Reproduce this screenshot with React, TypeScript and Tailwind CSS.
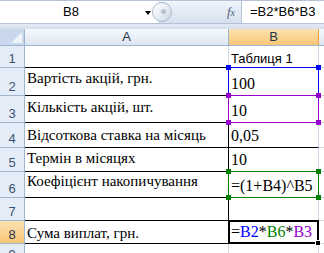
import React from "react";

type Row = {
  n: string;
  h: string;
  a?: string;
  aPad?: string;
  b?: React.ReactNode;
  bSans?: boolean;
  aLine?: boolean;
  bLine?: boolean;
  sel?: "blue" | "purple" | "green" | "active";
};

const rows: Row[] = [
  { n: "1", h: "h-[22px]", b: "Таблиця 1", bSans: true, aLine: true },
  { n: "2", h: "h-[28px]", a: "Вартість акцій, грн.", aPad: "pt-[2px]", b: "100", aLine: true, sel: "blue" },
  { n: "3", h: "h-[27px]", a: "Кількість акцій, шт.", aPad: "pt-[3px]", b: "10", aLine: true, sel: "purple" },
  { n: "4", h: "h-[25px]", a: "Відсоткова ставка на місяць", aPad: "pt-[4px]", b: "0,05", aLine: true, bLine: true },
  { n: "5", h: "h-[24px]", a: "Термін в місяцях", aPad: "pt-[2px]", b: "10", aLine: true },
  { n: "6", h: "h-[26px]", a: "Коефіцієнт накопичування", aPad: "pt-[1px]", b: "=(1+B4)^B5", aLine: true, sel: "green" },
  { n: "7", h: "h-[23px]", aLine: true, bLine: true },
  {
    n: "8",
    h: "h-[23px]",
    a: "Сума виплат, грн.",
    aPad: "pt-[4px]",
    b: (
      <>
        <span>=</span>
        <span className="text-[#0000ff]">B2</span>
        <span>*</span>
        <span className="text-[#008000]">B6</span>
        <span>*</span>
        <span className="text-[#9900cc]">B3</span>
      </>
    ),
    aLine: true,
    sel: "active",
  },
];

const selColor: Record<string, string> = {
  blue: "border-[#0000ff]",
  purple: "border-[#9900cc]",
  green: "border-[#008000]",
};
const handleColor: Record<string, string> = {
  blue: "bg-[#0000ff]",
  purple: "bg-[#9900cc]",
  green: "bg-[#008000]",
};

function Selection({ kind }: { kind: NonNullable<Row["sel"]> }) {
  if (kind === "active") {
    return (
      <div className="pointer-events-none absolute -left-[1px] -top-[1px] right-[-1px] bottom-[-1px] z-10 border-2 border-black">
        <div className="absolute inset-0 border border-white" />
        <div className="absolute -bottom-[4px] -right-[4px] h-[6px] w-[6px] border border-white bg-black" />
      </div>
    );
  }
  const dot = `absolute h-[5px] w-[5px] ${handleColor[kind]}`;
  return (
    <div className={`pointer-events-none absolute -left-[1px] -top-[1px] right-[-1px] bottom-[-1px] z-10 border ${selColor[kind]}`}>
      <div className={`${dot} -left-[3px] -top-[3px]`} />
      <div className={`${dot} -right-[3px] -top-[3px]`} />
      <div className={`${dot} -left-[3px] -bottom-[3px]`} />
      <div className={`${dot} -right-[3px] -bottom-[3px]`} />
    </div>
  );
}

function FormulaBar() {
  return (
    <div className="flex h-[24px] border-t border-b border-[#b6c3d6] bg-white font-['Liberation_Sans',sans-serif] text-[13px] text-black">
      <div className="relative flex w-[158px] items-center justify-center">
        <span className="mr-[16px]">B8</span>
        <span className="absolute right-[7px] top-[10px] h-0 w-0 border-x-[3.5px] border-t-[4px] border-x-transparent border-t-black" />
      </div>
      <div className="relative flex w-[83px] items-center bg-gradient-to-b from-[#f1f5fb] to-[#d6e0ee]">
        <div className="absolute -left-[6px] top-[1px] h-[20px] w-[20px] rounded-full border border-[#a9b8cc] bg-gradient-to-br from-[#ffffff] via-[#e9eef5] to-[#c6d2e3]">
          <div className="absolute left-[8px] top-[6px] h-[5px] w-[5px] rounded-full bg-[#b7bfca]" />
        </div>
        <span className="ml-auto mr-[6px] font-['Liberation_Serif',serif] text-[13px] italic text-[#52627a]">
          f<span className="text-[10px]">x</span>
        </span>
      </div>
      <div className="flex flex-1 items-center border-l border-[#b6c3d6] pl-[8px]">=B2*B6*B3</div>
    </div>
  );
}

function HeaderRow() {
  return (
    <div className="flex h-[17px] border-b border-[#9eb6ce] font-['Liberation_Sans',sans-serif] text-[13px] text-[#27354b]">
      <div className="relative w-[25px] border-r border-[#9eb6ce] bg-[#c9d8ec]">
        <div className="absolute bottom-[2px] right-[2px] h-0 w-0 border-b-[11px] border-l-[11px] border-b-[#eef3fa] border-l-transparent" />
      </div>
      <div className="flex w-[204px] items-center justify-center border-r border-[#9eb6ce] bg-gradient-to-b from-[#f6f9fd] to-[#dce6f2]">
        A
      </div>
      <div className="flex w-[90px] items-center justify-center border-r border-[#f2a431] bg-gradient-to-b from-[#fbe2b0] to-[#f8c676]">
        B
      </div>
      <div className="flex-1 bg-gradient-to-b from-[#f6f9fd] to-[#dce6f2]" />
    </div>
  );
}

function SheetRow({ r }: { r: Row }) {
  const active = r.sel === "active";
  return (
    <div className={`flex ${r.h}`}>
      <div
        className={`flex w-[25px] items-end justify-center border-r border-b border-[#9eb6ce] pb-[1px] font-['Liberation_Sans',sans-serif] text-[13px] leading-[15px] ${
          active ? "bg-gradient-to-b from-[#fbe2b0] to-[#f8c676] text-[#27354b]" : "bg-[#e4ecf7] text-[#3b5373]"
        }`}
      >
        {r.n}
      </div>
      <div
        className={`flex w-[204px] items-start overflow-hidden whitespace-nowrap border-b ${
          r.aLine ? "border-black" : "border-[#d0d7e5]"
        } ${r.n === "1" ? "border-r border-r-[#d0d7e5]" : "border-r border-r-black"} pl-[2px] ${r.aPad ?? ""}`}
      >
        <span className="font-['Liberation_Serif',serif] text-[15px] leading-[17px] text-black">{r.a}</span>
      </div>
      <div
        className={`relative flex w-[90px] items-end whitespace-nowrap border-r border-b border-r-[#d0d7e5] ${
          r.bLine ? "border-b-black" : "border-b-[#d0d7e5]"
        } pl-[2px] ${r.bSans ? "pb-[1px]" : "pb-[2px]"}`}
      >
        {r.bSans ? (
          <span className="font-['Liberation_Sans',sans-serif] text-[13px] leading-[15px] text-black">{r.b}</span>
        ) : (
          <span className="font-['Liberation_Serif',serif] text-[16px] leading-[18px] text-black">{r.b}</span>
        )}
        {r.sel && <Selection kind={r.sel} />}
      </div>
      <div className="flex-1 border-b border-[#d0d7e5]" />
    </div>
  );
}

export default function App() {
  return (
    <div className="h-[253px] w-[324px] overflow-hidden bg-white">
      <FormulaBar />
      <div className="h-[5px] bg-gradient-to-b from-[#e3eaf4] to-[#d5dfec]" />
      <HeaderRow />
      {rows.map((r) => (
        <SheetRow key={r.n} r={r} />
      ))}
      <div className="flex h-[20px]">
        <div className="flex w-[25px] items-start justify-center border-r border-[#9eb6ce] bg-[#e4ecf7] pt-[3px] font-['Liberation_Sans',sans-serif] text-[13px] leading-[15px] text-[#3b5373]">
          9
        </div>
        <div className="w-[204px] border-r border-[#d0d7e5]" />
        <div className="w-[90px] border-r border-[#d0d7e5]" />
        <div className="flex-1" />
      </div>
    </div>
  );
}
